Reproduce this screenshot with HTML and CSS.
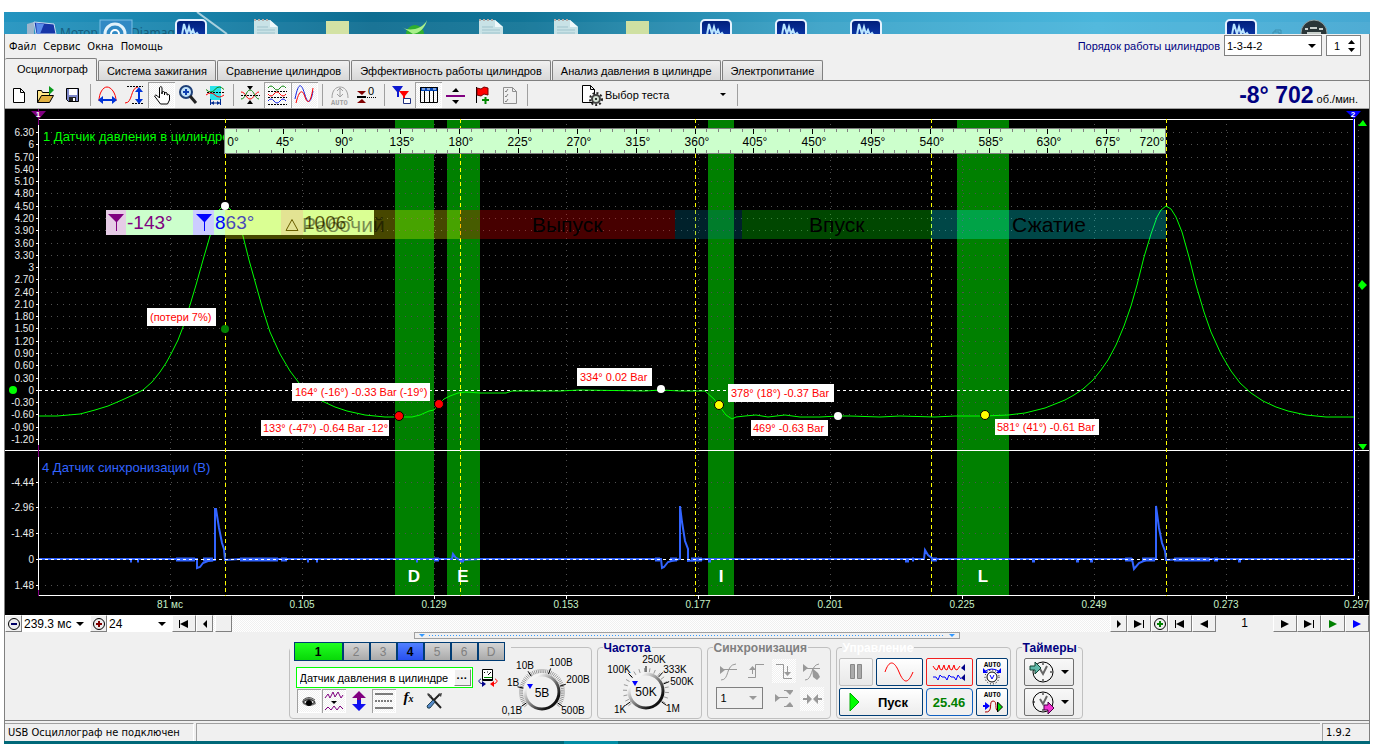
FILE: index.html
```html
<!DOCTYPE html>
<html lang="ru">
<head>
<meta charset="utf-8">
<title>USB Осциллограф</title>
<link rel="stylesheet" href="styles.css">
</head>
<body>
<svg class="desktop" viewBox="4 12 1366 22" aria-hidden="true">
  <defs>
    <linearGradient id="sky" x1="0" x2="1" y1="0" y2="0">
      <stop offset="0" stop-color="#2394c0"/><stop offset=".12" stop-color="#1a85ad"/><stop offset=".27" stop-color="#0e6d91"/><stop offset=".38" stop-color="#127597"/><stop offset=".6" stop-color="#3ba3c8"/><stop offset=".8" stop-color="#4ab6dc"/><stop offset="1" stop-color="#46a8d2"/>
    </linearGradient>
    <linearGradient id="navy" x1="0" x2="0" y1="0" y2="1"><stop offset="0" stop-color="#001d78"/><stop offset="1" stop-color="#1144c0"/></linearGradient>
    <g id="scopeIcon"><rect x="1" y="1" width="30" height="24" rx="4" fill="url(#navy)" stroke="#e6f2ff" stroke-width="2"/><path d="M7 16l2-11 3 10 2-7 2 7 2-4 2 5 2-2 2 3" fill="none" stroke="#b9e4ff" stroke-width="2"/></g>
    <g id="pageIcon"><path d="M0 1h16l8 7v14H0z" fill="#c8e2e6"/><path d="M16 1l8 7h-8z" fill="#eef8fa"/><path d="M0 1h16" stroke="#b7aaa5" stroke-width="2" stroke-dasharray="2 2"/><path d="M3 8h11M3 11h18M3 14h18" stroke="#9fc3cc"/></g>
  </defs>
  <rect x="4" y="12" width="1366" height="22" fill="url(#sky)"/>
  <rect x="4" y="22" width="1366" height="12" fill="#fff" opacity=".05"/>
  <path d="M197 12l30 22" stroke="#a9d0de" stroke-width="2"/>
  <g class="ghost"><text x="60" y="37">Мотор</text><text x="131" y="37">Diamag 2</text></g>
  <path d="M27 24l7-2v12h-7z" fill="#9eb6cc"/><path d="M34 22l20 2 2 10H36z" fill="#1736a8" stroke="#c9dcf2"/><path d="M36 23l8 1-4 10h-3z" fill="#5b8cea"/>
  <rect x="100" y="20" width="32" height="16" fill="#3189c4" stroke="#7cc0e6"/><circle cx="115" cy="34" r="10" fill="none" stroke="#e2f2fb" stroke-width="3"/><path d="M111 34a4 4 0 0 1 8 0" fill="none" stroke="#fff" stroke-width="2"/>
  <use href="#scopeIcon" x="175" y="19"/>
  <use href="#pageIcon" x="254" y="19"/>
  <rect x="326" y="21" width="23" height="14" fill="#d3e2a4"/>
  <circle cx="415" cy="34" r="9" fill="#2fae2f"/><path d="M402 27c4 4 20 4 25-7-2 9-8 13-14 14" fill="#a8f08a"/>
  <use href="#pageIcon" x="479" y="19"/><use href="#pageIcon" x="554" y="19"/>
  <rect x="626" y="21" width="23" height="14" fill="#cfe0a2"/>
  <use href="#scopeIcon" x="700" y="19"/><use href="#scopeIcon" x="775" y="19"/><use href="#scopeIcon" x="850" y="19"/>
  <use href="#scopeIcon" x="1225" y="19"/>
  <path d="M1273 32h6v4h-6zM1275 32v-2h6v4h-2" fill="none" stroke="#3d8faf"/>
  <circle cx="1314" cy="33" r="13" fill="#2a3638" stroke="#8fa3a6"/><path d="M1305 29h3M1310 28h7M1319 29h4M1307 33h14" stroke="#c8d0cc" stroke-width="2"/>
</svg>

<main class="app">
  <header class="menubar">
    <nav class="menu">
      <a href="#file">Файл</a><a href="#service">Сервис</a><a href="#windows">Окна</a><a href="#help">Помощь</a>
    </nav>
    <div class="order">
      <label for="order">Порядок работы цилиндров</label>
      <span class="drop order-select"><select id="order"><option>1-3-4-2</option></select></span>
      <span class="spin"><input id="cyl" type="text" value="1" aria-label="Цилиндр"><svg width="9" height="14" viewBox="0 0 9 14"><path d="M1 5h7L4.500 1zM1 9h7l-3.500 4z"/></svg></span>
    </div>
  </header>

  <div class="tabs" role="tablist">
    <button class="tab tab-active" role="tab">Осциллограф</button>
    <button class="tab" role="tab">Система зажигания</button>
    <button class="tab" role="tab">Сравнение цилиндров</button>
    <button class="tab" role="tab">Эффективность работы цилиндров</button>
    <button class="tab" role="tab">Анализ давления в цилиндре</button>
    <button class="tab" role="tab">Электропитание</button>
  </div>

  <div class="toolbar">
    <button class="tool" aria-label="Новый"><svg viewBox="0 0 27 24"><path d="M8.500 5.500h7l4 4v10h-11zM15.500 5.500v4h4" fill="#fff" stroke="#000"/></svg></button>
    <button class="tool" aria-label="Открыть"><svg viewBox="0 0 27 24"><path d="M5.500 19.500v-12h4l1 2h7v3" fill="#ffe68a" stroke="#000"/><path d="M5.500 19.500l4-7h12l-4 7z" fill="#e0b040" stroke="#000"/><path d="M17 3v9l5-5z" fill="#0a9a1c"/></svg></button>
    <button class="tool" aria-label="Сохранить"><svg viewBox="0 0 27 24"><path d="M7.500 5.500h12v13H9.500l-2-2z" fill="#7d87c8" stroke="#000"/><path d="M10 6h8v6h-8z" fill="#fff"/><path d="M10 14h7v4h-7z" fill="#222"/><path d="M14 15h2v3h-2z" fill="#fff"/></svg></button>
    <span class="sep"></span>
    <button class="tool" aria-label="Ширина"><svg viewBox="0 0 27 24"><path d="M5 18c0-8 4-14 8-14s9 6 9 14" fill="none" stroke="#f00"/><path d="M5 17h17" stroke="#0032d8" stroke-width="2"/><path d="M9 13v8l-5-4zM18 13v8l5-4z" fill="#0032d8"/></svg></button>
    <button class="tool" aria-label="Высота"><svg viewBox="0 0 27 24"><path d="M4 20c8 0 5-15 13-16" fill="none" stroke="#f00"/><path d="M6 3.500h16M11 20.500h11" stroke="#000" stroke-dasharray="2 1"/><path d="M18 6v12" stroke="#0032d8" stroke-width="2"/><path d="M14 9h8l-4-5zM14 16h8l-4 5z" fill="#0032d8"/></svg></button>
    <button class="tool pressed" aria-label="Рука"><svg viewBox="0 0 27 24"><path d="M11.500 15V4.500q1.500-2 2.500 0V11v-2q2-1 2.500 0v3-2q2-1 2.500 0v2q2-1 2.500 0v5l-2 4h-7l-6-8q1-2 3 0z" fill="#fff" stroke="#000"/></svg></button>
    <button class="tool" aria-label="Лупа"><svg viewBox="0 0 27 24"><circle cx="11" cy="9" r="6" fill="#bfe0f8" stroke="#1d3f78" stroke-width="2"/><path d="M8 9h6M11 6v6" stroke="#1040b0" stroke-width="2"/><path d="M15 13l6 7" stroke="#222" stroke-width="3"/></svg></button>
    <button class="tool" aria-label="Фрагмент"><svg viewBox="0 0 27 24"><path d="M8 3h11v14H8z" fill="#28e4ea"/><path d="M4 6.500q5 5 9 0t9 0" fill="none" stroke="#108810"/><path d="M5 9.500h18" stroke="#000" stroke-dasharray="2 1"/><path d="M4 12q5-4 9 0t9 0" fill="none" stroke="#f00"/><path d="M8 20h11M8.500 16v6M18.500 16v6" stroke="#002a90"/><path d="M9 20l3-2v4zM18 20l-3-2v4z" fill="#002a90"/></svg></button>
    <span class="sep"></span>
    <button class="tool" aria-label="Масштаб"><svg viewBox="0 0 27 24"><path d="M4 9c5 0 5 7 9 7s5-7 9-7" fill="none" stroke="#f00"/><path d="M4 16c5 0 5-9 9-9s5 9 9 9" fill="none" stroke="#108810"/><path d="M4 12.500h19" stroke="#000" stroke-dasharray="2 1"/><path d="M10 3h6l-3 4zM10 21h6l-3-4z"/></svg></button>
    <button class="tool pressed" aria-label="Раздельно"><svg viewBox="0 0 27 24"><path d="M4 5q3-4 6 0t6 0 6 0" fill="none" stroke="#108810"/><path d="M4 8.500h19M4 14.500h19M4 21.500h19" stroke="#000" stroke-dasharray="2 1"/><path d="M4 11q3 4 6 0t6 0 6 0" fill="none" stroke="#f00"/><path d="M4 18q3-4 6 0t6 0 6 0" fill="none" stroke="#1020e0"/></svg></button>
    <button class="tool pressed" aria-label="Совместно"><svg viewBox="0 0 27 24"><path d="M4 16C8-4 11 2 14 12s6 8 8-4" fill="none" stroke="#1020e0"/><path d="M5 20C9 4 12 8 14 14c3 9 6 4 8-9" fill="none" stroke="#f00"/></svg></button>
    <span class="sep"></span>
    <button class="tool" aria-label="Авто" disabled><svg viewBox="0 0 27 24"><path d="M6 15c0-8 4-11 8-11s8 3 8 11M14 5v9M11 8l3-3 3 3M11 11l3 3 3-3" fill="none" stroke="#a0a0a0"/><text class="micro" x="5" y="22" fill="#a0a0a0">AUTO</text></svg></button>
    <button class="tool" aria-label="Ноль"><svg viewBox="0 0 27 24"><path d="M4 8h9l-4 4zM4 20h9l-4-4z" fill="#800000"/><path d="M4 14h9" stroke="#000" stroke-width="2"/><path d="M12 14.500h11" stroke="#000" stroke-dasharray="1 1"/><text class="zero" x="15" y="12">0</text></svg></button>
    <span class="sep"></span>
    <button class="tool" aria-label="Маркеры"><svg viewBox="0 0 27 24"><path d="M4 3h11l-4 6v5H9V9z" fill="#0c18d0"/><path d="M11 8h10l-4 5v4h-2v-4z" fill="#f00"/><path d="M15.500 15.500h7v5h-7z" fill="#fff" stroke="#203080"/></svg></button>
    <button class="tool pressed" aria-label="Таблица"><svg viewBox="0 0 27 24"><path d="M5 4h18v4H5z" fill="#0044b8"/><path d="M5.500 4.500h17v15h-17zM9.500 8v11M14.500 8v11M18.500 8v11" fill="none" stroke="#000"/><path d="M7 6h3M12 6h3M18 6h3" stroke="#fff"/></svg></button>
    <button class="tool" aria-label="Разделитель"><svg viewBox="0 0 27 24"><path d="M4 13h19" stroke="#800080" stroke-width="2"/><path d="M10 9h7l-3-4zM10 17h7l-3 4z"/></svg></button>
    <button class="tool" aria-label="Флаг"><svg viewBox="0 0 27 24"><path d="M7.500 4v16" stroke="#000"/><path d="M8 5l4 1 3-2 4 1v7l-4-1-3 2-4-1z" fill="#f00" stroke="#700"/><path d="M13 17h7M16.500 14v7" stroke="#080" stroke-width="2"/></svg></button>
    <button class="tool" aria-label="Список" disabled><svg viewBox="0 0 27 24"><path d="M7.500 4.500h9l4 4v12h-13zM16.500 4.500v4h4" fill="none" stroke="#909090"/><path d="M9 8l1 1 2-3M9 13l1 1 2-3M9 18l1 1 2-3" fill="none" stroke="#808080"/></svg></button>
    <span class="sep"></span>
    <button class="test"><svg width="22" height="22" viewBox="0 0 22 22"><path d="M1.500 1.500h8l4 4v13h-12zM9.500 1.500v4h4" fill="#fff" stroke="#000"/><circle cx="15" cy="15" r="4" fill="#d5e2d5" stroke="#444" stroke-width="2"/><circle cx="15" cy="15" r="6" fill="none" stroke="#222" stroke-width="2" stroke-dasharray="2 2"/><circle cx="15" cy="15" r="1"/></svg><span>Выбор теста</span><i class="caret"></i></button>
    <span class="sep"></span>
    <output class="rpm"><b>-8° 702</b> об./мин.</output>
  </div>

  <svg class="scope" id="scope" viewBox="5 109 1364 506" role="img" aria-label="Осциллограмма">
    <rect x="5" y="109" width="1364" height="506" fill="#000"/>
    <path d="M395 120h39v475h-39zM447 120h33v475h-33zM708 120h26v475h-26zM957 120h52v475h-52z" fill="#008000"/>
    <g id="grid"></g>
    <path d="M39 390.500h1315" class="zero-line"/>
    <path d="M38.500 119v476M38 119.500h1316M5 450.500h1364M38 595.500h1317M1354.500 119v476" stroke="#fff" fill="none"/>
    <path d="M38.500 109v16M38.500 445v12M38.500 590v6" stroke="#800080"/>
    <path d="M1353.500 119v476" stroke="#00f"/>
    <path d="M31 111h15l-7 8z" fill="#800080"/><path d="M1346 111h15l-7 8z" fill="#00f"/>
    <text class="flag" x="38" y="117">1</text><text class="flag" x="1353" y="117">2</text>
    <path d="M225.500 119v477M460.500 119v477M695.500 119v477M931.500 119v477M1166.500 119v477" class="cursor"/>

    <path class="pressure" d="M39 416L57 416 80 414 95 410 108 406 122 400 133 395 143 390 152 382 160 372 166 363 171 354 178 340 183 327 190 305 196 285 203 260 210 236 215 218 219 210 222 207 225 206 228 207 231 210 236 218 243 236 249 260 256 285 263 310 270 332 280 354 290 371 299 383 310 393 322 401 335 407 347 411 365 415 385 417 399 417 412 417 420 415 429 411 434 410 438 405 444 399 450 396 458 393 466 392 480 393 506 393 512 391 560 391 580 390 645 391 661 390 680 391 705 391 714 399 720 407 726 415 732 419 736 417 745 416 756 415 768 417 785 415 800 417 820 417 838 416 850 416 880 417 900 416 935 417 955 416 985 416 1008 415 1025 413 1045 408 1065 400 1074 395 1083 389 1093 380 1101 370 1108 360 1116 345 1124 326 1131 306 1137 285 1144 257 1151 234 1157 217 1161 210 1166 206 1171 209 1176 217 1182 232 1189 257 1196 285 1204 312 1211 332 1221 354 1231 371 1240 383 1251 393 1263 401 1276 407 1288 411 1306 415 1326 417 1354 417"/>
    <path class="sync" d="M39 559L197 559 197 568 200 567 203 563 208 561 215 560 215 509 216 509 219 528 222 543 224 549 225 560 240 559 452 559 453 554 456 558 460 560 480 559 661 559 662 568 664 567 668 562 675 560 680 559 680 506 682 522 685 541 688 549 688 561 705 559 924 559 925 550 928 555 933 559 1132 559 1134 569 1139 563 1146 560 1156 559 1156 506 1159 528 1162 543 1165 551 1166 560 1185 559 1354 559"/>
    <path class="noise" d="M130 560.500h2M137 560.500h2M176 559.500h19M203 559.500h10M240 559.500h38M281 559.500h6M307 560.500h2M316 560.500h2M416 560.500h2M434 559.500h5M460 560.500h4M655 559.500h5M670 559.500h7M691 559.500h11M708 560.500h3M905 560.500h4M912 559.500h2M931 559.500h6M1032 560.500h3M1076 560.500h3M1090 560.500h3M1125 559.500h7M1142 559.500h13M1174 559.500h36M1214 559.500h4M1238 560.500h3"/>
    <path d="M39 559.500h1315" class="zero-line"/>

    <text class="ch ch1" x="43" y="141">1 Датчик давления в цилиндре</text>
    <text class="ch ch4" x="42" y="472">4 Датчик синхронизации (В)</text>
    <rect x="224.500" y="128.500" width="941" height="25" fill="#cfc" stroke="#808080"/>
    <g id="ruler"></g>

    <path d="M106 210h268v25H106z" fill="#cfc"/>
    <path d="M106 210h20v25h-20z" fill="#e6cce6"/><path d="M193 210h21v25h-21z" fill="#ccf"/><path d="M281 210h22v25h-22z" fill="#d9d9cc"/>
    <path d="M108 214h16l-7 8v9h-1v-9z" fill="#800080"/><path d="M196 214h16l-7 8v9h-1v-9z" fill="#00f"/><path d="M286 230.500h12l-6-11z" fill="none" stroke="#302000"/>
    <text class="read" x="127" y="229" fill="#800080">-143°</text><text class="read" x="215" y="229" fill="#00f">863°</text><text class="read" x="304" y="229" fill="#111">1006°</text>
    <path d="M225 210h235v29H225z" fill="#ff0" opacity=".28"/><path d="M460 210h215v29H460z" fill="#f00" opacity=".28"/><path d="M675 210h67v29h-67z" fill="#079" opacity=".28"/><path d="M742 210h189v29H742z" fill="#0f0" opacity=".28"/><path d="M931 210h235v29H931z" fill="#0ff" opacity=".28"/>
    <text class="phase" x="302" y="232" opacity=".45">Рабочий</text><text class="phase" x="532" y="232">Выпуск</text><text class="phase" x="809" y="232">Впуск</text><text class="phase" x="1012" y="232">Сжатие</text>

    <g fill="#fff"><path d="M147 308h69v18h-69zM292 383h138v18H292zM261 420h128v16H261zM577 368h75v18h-75zM728 384h106v18H728zM751 420h77v16h-77zM995 419h104v16H995z"/><circle cx="225" cy="206" r="4"/><circle cx="661" cy="389" r="4"/><circle cx="838" cy="416" r="4"/></g>
    <g class="note"><text x="150" y="321">(потери 7%)</text><text x="295" y="396">164° (-16°) -0.33 Bar (-19°)</text><text x="263" y="432">133° (-47°) -0.64 Bar -12°</text><text x="580" y="381">334° 0.02 Bar</text><text x="731" y="397">378° (18°) -0.37 Bar</text><text x="753" y="432">469° -0.63 Bar</text><text x="997" y="431">581° (41°) -0.61 Bar</text></g>
    <circle cx="225" cy="329" r="4" fill="#008000"/><circle cx="13" cy="390" r="4" fill="#0f0"/>
    <g stroke="#000"><circle cx="399" cy="416" r="4.500" fill="#f00"/><circle cx="439" cy="404" r="4.500" fill="#f00"/><circle cx="719" cy="405" r="4.500" fill="#ff0"/><circle cx="985" cy="415" r="4.500" fill="#ff0"/></g>
    <g class="valve"><text x="414" y="582">D</text><text x="463" y="582">E</text><text x="721" y="582">I</text><text x="983" y="582">L</text></g>
    <path d="M1358 126h9l-4-6zM1358 444h9l-4 6zM1358 285l4-5 5 5-5 5z" fill="#0f0"/>
  </svg>

  <div class="scrollbar">
    <button class="sb sb-round" aria-label="Меньше"><svg width="14" height="14" viewBox="0 0 14 14"><circle cx="7" cy="7" r="5.500" fill="#eee" stroke="#000"/><path d="M4 7h6" stroke="#006" stroke-width="2"/></svg></button>
    <span class="drop plain span-select"><select aria-label="Длительность"><option>239.3 мс</option></select></span>
    <button class="sb sb-round" aria-label="Больше"><svg width="14" height="14" viewBox="0 0 14 14"><circle cx="7" cy="7" r="5.500" fill="#eee" stroke="#000"/><path d="M4 7h6M7 4v6" stroke="#800000" stroke-width="2"/></svg></button>
    <span class="drop plain div-select"><select aria-label="Деления"><option>24</option></select></span>
    <button class="sb sb-wide" aria-label="В начало"><svg width="12" height="8" viewBox="0 0 12 8"><path d="M1 0h1v8H1zM2 4l8-4v8z"/></svg></button>
    <button class="sb" aria-label="Назад"><svg width="12" height="8" viewBox="0 0 12 8"><path d="M4 4l4-4v8z"/></svg></button>
    <div class="track"><button class="thumb" aria-label="Ползунок"></button></div>
    <button class="sb" aria-label="Вперёд"><svg width="12" height="8" viewBox="0 0 12 8"><path d="M8 4L4 0v8z"/></svg></button>
    <button class="sb sb-wide" aria-label="В конец"><svg width="12" height="8" viewBox="0 0 12 8"><path d="M10 0h1v8h-1zM9 4L1 0v8z"/></svg></button>
    <button class="sb sb-round" aria-label="Добавить"><svg width="14" height="14" viewBox="0 0 14 14"><circle cx="7" cy="7" r="5.500" fill="#eee" stroke="#000"/><path d="M4 7h6M7 4v6" stroke="#008000" stroke-width="2"/></svg></button>
    <button class="sb sb-wide" aria-label="Первая страница"><svg width="12" height="8" viewBox="0 0 12 8"><path d="M1 0h1v8H1zM2 4l8-4v8z"/></svg></button>
    <button class="sb sb-wide" aria-label="Предыдущая"><svg width="12" height="8" viewBox="0 0 12 8"><path d="M2 4l8-4v8z"/></svg></button>
    <span class="page">1</span>
    <button class="sb sb-wide" aria-label="Следующая"><svg width="12" height="8" viewBox="0 0 12 8"><path d="M10 4L2 0v8z"/></svg></button>
    <button class="sb sb-wide" aria-label="Последняя"><svg width="12" height="8" viewBox="0 0 12 8"><path d="M10 0h1v8h-1zM9 4L1 0v8z"/></svg></button>
    <button class="sb sb-wide" aria-label="Воспроизвести"><svg width="12" height="8" viewBox="0 0 12 8"><path d="M10 4L2 0v8z" fill="#008000"/></svg></button>
    <button class="sb sb-wide" aria-label="Быстро"><svg width="12" height="8" viewBox="0 0 12 8"><path d="M10 4L2 0v8z" fill="#00f"/></svg></button>
  </div>

  <div class="panel">
    <div class="splitter"><i></i><span></span><i></i></div>
    <div class="groups">
      <section class="group g-channel" aria-label="Канал">
        <div class="channel-col">
          <div class="channels"><button class="c1">1</button><button>2</button><button>3</button><button class="c4">4</button><button>5</button><button>6</button><button>D</button></div>
          <div class="sensor">
            <span class="sensor-field"><input type="text" value="Датчик давления в цилиндре" aria-label="Датчик"><button aria-label="Выбрать датчик">···</button></span>
            <button class="flat" aria-label="Прибор"><svg width="20" height="20" viewBox="0 0 20 20"><path d="M4.500 1.500h10v11h-10z" fill="#fff" stroke="#000"/><path d="M5 12h9" stroke="#000" stroke-width="2"/><path d="M6 9.500h8" stroke="#080"/><path d="M6 5l1-1M9 4h1M12 4l1 1M10 7l2-2" stroke="#000"/><path d="M3 11c-3 1-3 4 2 5" fill="none" stroke="#008"/><path d="M4 13v6l4-3z" fill="#008"/><path d="M17 11c3 1 3 4-2 5" fill="none" stroke="#f00"/><path d="M16 13v6l-4-3z" fill="#f00"/></svg></button>
          </div>
          <div class="view-tools">
            <button class="cell sunken" aria-label="Видимость"><svg viewBox="0 0 24 24"><path d="M5 12q7-6 13 0l1 3q-7 4-13 0z" fill="#777"/><path d="M6 13q6-5 12 0-6 5-12 0" fill="#ddd" stroke="#333"/><circle cx="12" cy="14" r="3"/><path d="M6 11q6-5 12 0" fill="none" stroke="#555"/></svg></button>
            <button class="cell sunken" aria-label="Инверсия"><svg viewBox="0 0 24 24"><path d="M3 9l3-4 2 4 3-6 2 5 3-5 3 6 2-3M3 21l3-3 3 3 3-4 3 4 3-4 3 3" fill="none" stroke="#800080"/><path d="M9 12h6l-3 3z"/></svg></button>
            <button class="cell" aria-label="Смещение"><svg viewBox="0 0 24 24"><path d="M12 2l7 7h-5v2h-4V9H5z" fill="#800080"/><path d="M12 22l7-7h-5v-4h-4v4H5z" fill="#1010f0"/></svg></button>
            <button class="cell sunken" aria-label="Линии"><svg viewBox="0 0 24 24"><path d="M3 5h18M3 19h18" stroke="#000"/><path d="M3 12h18" stroke="#000" stroke-dasharray="2 1"/></svg></button>
            <button class="cell fx" aria-label="Функция">f<small>x</small></button>
            <button class="cell" aria-label="Настройки"><svg viewBox="0 0 24 24"><path d="M6 5l13 14M18 5l-8 8" stroke="#222" stroke-width="2"/><path d="M5 4l3 5 2-2zM16 5l4-1-1 4z" fill="#444"/><path d="M11 11l2 2-5 6q-3 1-3-2z" fill="#5488c8" stroke="#245"/></svg></button>
          </div>
        </div>
        <svg class="knob" id="volts" width="90" height="64" viewBox="500 654 90 64" aria-label="Диапазон 5В"></svg>
      </section>

      <section class="group g-freq">
        <h2>Частота</h2>
        <svg class="knob" id="freq" width="100" height="62" viewBox="598 656 100 62" aria-label="Частота 50K"></svg>
      </section>

      <section class="group g-sync">
        <h2>Синхронизация</h2>
        <div class="sync-grid">
          <button class="cell" disabled aria-label="Уровень"><svg viewBox="0 0 24 24"><path d="M5 21c9 0 4-15 15-16M4 10.500h17" fill="none" stroke="#999"/><path d="M4 7l5 4-5 4z" fill="#999"/></svg></button>
          <button class="cell" disabled aria-label="Фронт"><svg viewBox="0 0 24 24"><path d="M4 18.500h7.500v-13H20M8.500 15V9" fill="none" stroke="#999"/><path d="M5 11h7L8.500 7z" fill="#999"/></svg></button>
          <button class="cell checked" disabled aria-label="Спад"><svg viewBox="0 0 24 24"><path d="M4 5.500h7.500v14H20M15.500 7v9" fill="none" stroke="#999"/><path d="M12 13h7l-3.500 4z" fill="#999"/></svg></button>
          <button class="cell" disabled aria-label="Ручной"><svg viewBox="0 0 24 24"><path d="M5 21c8 0 5-15 14-16M3 9.500h17" fill="none" stroke="#999"/><path d="M3 5l5 4-5 4zM12 9l6 5 2 4-3 3-4-3z" fill="#999"/></svg></button>
          <span class="drop sync-select"><select disabled aria-label="Канал синхронизации"><option>1</option></select></span>
          <button class="cell" disabled aria-label="Окно"><svg viewBox="0 0 24 24"><path d="M4 10.500h12M12 3.500h9M12 19.500h9" stroke="#999"/><path d="M3 7l5 4-5 4zM14 4h7l-3 4zM14 19h7l-3-4z" fill="#999"/></svg></button>
          <button class="cell checked" disabled aria-label="Сжать"><svg viewBox="0 0 24 24"><path d="M3 11h4V7l5 5-5 5v-4H3z" fill="#999"/><path d="M22 11h-4V7l-5 5 5 5v-4h4z" fill="#999"/></svg></button>
        </div>
      </section>

      <section class="group g-control">
        <h2>Управление</h2>
        <div class="control-grid">
          <button class="cmd" disabled aria-label="Пауза"><svg width="14" height="18" viewBox="0 0 14 18"><path d="M1.500 1.500h4v14h-4zM8.500 1.500h4v14h-4z" fill="#aaa" stroke="#888"/></svg></button>
          <button class="cmd c-blue" aria-label="Развёртка"><svg width="34" height="22" viewBox="0 0 34 22"><path d="M3 11c4-12 9-12 14 0s9 12 14 0" fill="none" stroke="#f00"/></svg></button>
          <button class="cmd c-red" aria-label="Самописец"><svg width="36" height="20" viewBox="0 0 36 20"><path d="M2 4l2 3 2 1 2-5 1 4 2 1 2-5 1 4 2 1 2-5 1 4 2 1 2-5 1 4 2 1 3-4" fill="none" stroke="#f00"/><path d="M2 15h3l2 3 2-5 2 2h3l2 3 2-5 2 2h3l2 3 2-5 3 4" fill="none" stroke="#00f"/><path d="M34 2v7l-4-3zM34 12v7l-4-3z" fill="#008"/></svg></button>
          <button class="cmd c-blue" aria-label="Авто напряжение"><svg width="26" height="26" viewBox="0 0 26 26"><text class="micro" x="5" y="8">AUTO</text><path d="M5 13q8-6 16 0" fill="none" stroke="#00f"/><path d="M4 9v5h5zM22 9v5h-5z" fill="#00f"/><circle cx="13" cy="18" r="5" fill="#fff" stroke="#000"/><circle cx="13" cy="18" r="7" fill="none" stroke="#000" stroke-dasharray="1 2"/><path d="M11 16l2 4 2-4" fill="none" stroke="#00f"/></svg></button>
          <button class="cmd c-blue start"><svg width="11" height="20" viewBox="0 0 11 20"><path d="M1 1v18l9-9z" fill="#0f0" stroke="#0a0"/></svg><b>Пуск</b></button>
          <output class="cmd value">25.46</output>
          <button class="cmd c-blue" aria-label="Авто запуск"><svg width="26" height="26" viewBox="0 0 26 26"><text class="micro" x="5" y="8">AUTO</text><path d="M6 23c9 1 3-11 8-11s1 9 5 10" fill="none" stroke="#a00"/><path d="M4 17h5" stroke="#00f" stroke-width="2"/><path d="M6 13l5 4-5 4z" fill="#00f"/><path d="M18.500 13v10l5-5z" fill="#0d0" stroke="#000"/></svg></button>
        </div>
      </section>

      <section class="group g-timer">
        <h2>Таймеры</h2>
        <button class="cmd timer" aria-label="Таймер запуска"><svg width="28" height="26" viewBox="0 0 28 26"><circle cx="15" cy="13" r="10" fill="#f4f4f4" stroke="#000"/><path d="M12 10l3 5 4-8" fill="none" stroke="#666" stroke-width="2"/><path d="M15 4v2M24 13h-2M15 22v-2" stroke="#000"/><path d="M2 7h5V3l6 6-6 6v-4H2z" fill="#5fb8a8" stroke="#143"/></svg><i class="caret"></i></button>
        <button class="cmd timer" aria-label="Таймер остановки"><svg width="28" height="26" viewBox="0 0 28 26"><circle cx="15" cy="13" r="10" fill="#f4f4f4" stroke="#000"/><path d="M12 10l3 5 4-8" fill="none" stroke="#666" stroke-width="2"/><path d="M15 4v2M5 13h2M15 22v-2" stroke="#000"/><path d="M16 16h4v-3l6 6-6 6v-4h-4z" fill="#f032d0" stroke="#404"/></svg><i class="caret"></i></button>
      </section>
    </div>
  </div>

  <footer class="status">
    <span class="pane pane-msg">USB Осциллограф не подключен</span>
    <span class="pane pane-fill"></span>
    <span class="pane pane-ver">1.9.2</span>
  </footer>
</main>
<div class="taskbar"><span></span></div>
<script src="app.js"></script>
</body>
</html>
```
FILE: styles.css
```css
* { box-sizing: border-box; }
body { margin: 0; padding: 12px 12px 0 4px; background: #fff; color: #000; font: 11px/14px "Liberation Sans", Arial, sans-serif; }
button, input, select, output { font: inherit; color: inherit; margin: 0; padding: 0; border-radius: 0; }
button { background: none; border: 0; display: flex; align-items: center; justify-content: center; }
svg { display: block; }
.desktop { width: 100%; height: auto; }
.ghost { font: 12px "Noto Sans", sans-serif; fill: #0b3a55; opacity: .6; }
.app { background: #f0f0f0; border: solid #808080; border-width: 0 1px; }

.menubar { display: flex; justify-content: space-between; height: 24px; }
.menu { display: flex; gap: 7px; padding: 6px 4px 0; font: 11px/14px "DejaVu Sans Condensed", "DejaVu Sans", sans-serif; }
.menu a { color: #000; text-decoration: none; }
.order { display: flex; gap: 4px; padding: 1px 8px 0 0; color: #000080; }
.order label { line-height: 22px; }
.drop { position: relative; display: block; }
.drop::after, .caret { content: ""; border: solid transparent; border-width: 4px 4px 0; border-top-color: #000; width: 0; height: 0; }
.drop::after { position: absolute; right: 6px; top: calc(50% - 2px); pointer-events: none; }
.drop select { appearance: none; display: block; width: 100%; height: 100%; background: #fff; color: #000; border: 1px solid #808080; padding: 0 2px; opacity: 1; }
.order-select { width: 98px; height: 21px; }
.spin { display: flex; align-items: center; width: 35px; height: 21px; background: #fff; border: 1px solid #808080; }
.spin input { width: 20px; border: 0; background: none; color: #000; padding-left: 7px; }

.tabs { display: flex; align-items: flex-end; gap: 1px; height: 23px; border-bottom: 1px solid #808080; }
.tab { height: 20px; padding: 0 8px; white-space: nowrap; background: linear-gradient(#f0f0f0, #d8d8d8); border: 1px solid #808080; border-bottom: 0; border-radius: 2px 2px 0 0; flex: 0 0 auto; }
.tab-active { height: 23px; margin-bottom: -1px; background: #f0f0f0; border-left: 0; padding: 0 8px 2px 12px; }

.toolbar { display: flex; align-items: center; height: 28px; border-bottom: 1px solid #a0a0a0; }
.tool { width: 27px; height: 26px; }
.tool svg { width: 27px; height: 24px; flex: none; }
.pressed, .sunken, .checked { background: repeating-conic-gradient(#fff 0 25%, #f0f0f0 0 50%) 0 0 / 2px 2px; }
.pressed, .sunken { box-shadow: inset 1px 1px #a0a0a0, inset -1px -1px #fff; }
.sep { width: 1px; height: 22px; margin: 0 3px 0 4px; background: #a0a0a0; }
.micro { font: bold 7px "Liberation Mono", monospace; }
.zero { font: 11px "Liberation Sans", sans-serif; }
.test { width: 202px; height: 26px; padding: 0 4px 0 50px; justify-content: flex-start; }
.test span { margin: 0 auto 0 2px; }
.caret { display: block; }
.test .caret { border-width: 3px 3px 0; margin-right: 3px; }
.rpm { margin-left: auto; padding-right: 11px; white-space: nowrap; color: #000; }
.rpm b { font: bold 23px/24px "Liberation Sans", Arial, sans-serif; color: #000080; }

.scope { width: 100%; height: auto; font-family: "Liberation Sans", Arial, sans-serif; }
.scope text { white-space: pre; }
.grid-line { stroke: #505050; stroke-dasharray: 1 5; fill: none; shape-rendering: crispEdges; }
.zero-line { stroke: #fff; stroke-dasharray: 3 3; shape-rendering: crispEdges; }
.cursor { stroke: #ff0; stroke-dasharray: 4 3; shape-rendering: crispEdges; }
.tick { stroke: #fff; }
.axis-y { font-size: 10px; fill: #ececec; text-anchor: end; }
.axis-x { font-size: 10px; fill: #c8f0c8; text-anchor: middle; }
.axis-last { text-anchor: end; }
.pressure { fill: none; stroke: #0f0; stroke-width: 1; }
.sync { fill: none; stroke: #3264ff; stroke-width: 2; }
.noise { stroke: #3264ff; stroke-width: 4; }
.ch { font-size: 13px; }
.ch1 { fill: #0f0; }
.ch4 { fill: #3264ff; }
.ruler-text { font-size: 12px; text-anchor: middle; fill: #000; }
.flag { font: bold 8px "Liberation Sans", sans-serif; fill: #fff; text-anchor: middle; }
.read { font-size: 19px; }
.phase { font-size: 21px; fill: #000; }
.note { font-size: 11px; fill: #f00; }
.valve { font-size: 17px; font-weight: bold; fill: #fff; text-anchor: middle; }

.scrollbar { display: flex; height: 17px; font-size: 12px; }
.sb { width: 17px; height: 17px; border: 1px solid; border-color: #fff #808080 #808080 #fff; background: #f0f0f0; flex: none; }
.sb svg { flex: none; }
.sb-wide { width: 24px; }
.plain select { border: 0; }
.span-select { width: 68px; }
.div-select { width: 65px; }
.track { flex: 1; background: repeating-conic-gradient(#fff 0 25%, #f0f0f0 0 50%) 0 0 / 2px 2px; padding-left: 2px; }
.thumb { width: 17px; height: 17px; border: 1px solid; border-color: #fff #808080 #808080 #fff; background: #f0f0f0; }
.page { width: 57px; text-align: center; line-height: 17px; }

.panel { border-bottom: 1px solid #808080; padding-bottom: 1px; }
.splitter { width: 40%; height: 7px; margin: 0 auto; border: 1px solid #a0a0a0; display: flex; align-items: center; gap: 4px; padding: 0 4px; }
.splitter span { flex: 1; height: 1px; background: repeating-linear-gradient(90deg, #3399ff 0 1px, transparent 1px 3px); }
.splitter i { border: solid transparent; border-width: 3px 3px 0; border-top-color: #3399ff; }
.groups { display: flex; justify-content: center; gap: 5px; padding: 8px 3px 0 0; }
.group { height: 72px; border: 1px solid #c0c0c0; border-radius: 4px; flex: none; }
.group h2 { display: table; margin: -7px 0 0 5px; padding: 0 1px; background: #f0f0f0; color: #000080; font: bold 12px/14px "Liberation Sans", Arial, sans-serif; }
.g-channel { width: 303px; display: flex; justify-content: space-between; }
.g-freq { width: 105px; }
.g-sync { width: 124px; }
.g-sync h2 { color: #808080; }
.g-control { width: 175px; }
.g-control h2 { color: #fff; }
.g-timer { width: 67px; }
.channel-col { margin-top: -6px; }
.channels { display: flex; background: #f0f0f0; padding: 0 6px 0 4px; }
.channels button { width: 27px; height: 19px; border: 1px solid #003c74; background: linear-gradient(#d4d4d4, #aaa); color: #808080; font-size: 12px; }
.channels .c1 { width: 49px; background: linear-gradient(#20ff20, #08d808); color: #000; font-weight: bold; }
.channels .c4 { background: linear-gradient(#5080ff, #2850f0); color: #000; font-weight: bold; }
.sensor { display: flex; padding: 6px 0 0 6px; gap: 5px; }
.sensor-field { display: flex; width: 177px; height: 21px; background: #fff; border: 1px solid #0f0; padding: 1px; }
.sensor-field input { flex: 1; min-width: 0; border: 0; padding-left: 2px; background: none; color: #000; }
.sensor-field button { width: 17px; border: 1px solid; border-color: #fff #808080 #808080 #fff; background: #f0f0f0; font-weight: bold; }
.view-tools { display: flex; padding: 1px 0 0 7px; gap: 1px; }
.cell { width: 24px; height: 24px; }
.cell svg { width: 24px; height: 24px; flex: none; }
.fx { font: italic bold 15px "Liberation Serif", serif; align-items: baseline; }
.fx small { font-size: 10px; }
.knob { font: 10px "Liberation Sans", Arial, sans-serif; flex: none; }
.knob text { text-anchor: middle; }
.knob .dial { font-size: 12px; }
.g-channel .knob { margin: 6px 0 0 -12px; }
.g-freq .knob { margin-left: 1px; }

.sync-grid { display: grid; grid-template-columns: repeat(4, 24px); gap: 4px; padding: 4px 0 0 8px; }
.sync-select { grid-column: span 2; width: 47px; height: 22px; }
.sync-select select { background: #f0f0f0; padding-left: 4px; }
.sync-select::after { border-top-color: #999; }
.control-grid { display: grid; grid-template-columns: 34px 47px 47px 32px; gap: 2px 3px; padding: 3px 0 0 2px; }
.cmd { height: 28px; border: 1px solid #c0c0c0; border-radius: 2px; background: linear-gradient(#f8f8f8, #e8e8e8); display: flex; align-items: center; justify-content: center; }
.cmd svg { flex: none; }
.c-blue { border-color: #003c74; background: linear-gradient(#fff, #ececec); }
.c-red { border-color: #f02020; }
.start { grid-column: span 2; gap: 18px; padding-right: 4px; font: bold 13px "Liberation Sans", Arial, sans-serif; }
.value { border-color: #1060c0; border-radius: 4px; background: #f0f0f0; color: #008000; font: bold 13px "Liberation Sans", Arial, sans-serif; }
.timer { width: 50px; margin: 2px 0 0 7px; gap: 5px; border-color: #707070; }
.g-timer h2 + .timer { margin-top: 3px; }

.status { display: flex; margin-top: 2px; height: 18px; gap: 2px; font: 11px/17px "DejaVu Sans Condensed", "DejaVu Sans", sans-serif; }
.pane { border: solid #a0a0a0; border-width: 1px 0 0; padding-left: 3px; }
.pane-msg { width: 189px; white-space: nowrap; border-right: 1px solid #fff; }
.pane-fill { flex: 1; border-left-width: 1px; }
.pane-ver { width: 47px; border-left-width: 1px; }
.taskbar { height: 4px; background: #006878; }
.taskbar span { display: block; width: 54px; height: 4px; margin-left: 41%; background: #008ca4; }
```
FILE: app.js
```js
const NS = "http://www.w3.org/2000/svg";

function add(parent, name, attrs, text) {
  const node = document.createElementNS(NS, name);
  for (const key in attrs) node.setAttribute(key, attrs[key]);
  if (text !== undefined) node.textContent = text;
  parent.appendChild(node);
}

/* Plot grid and axes */
const grid = document.getElementById("grid");
function level(y, label) {
  add(grid, "path", { d: `M45 ${y + 0.5}H1354`, class: "grid-line" });
  add(grid, "path", { d: `M36 ${y + 0.5}h3`, class: "tick" });
  add(grid, "text", { x: 34, y: y + 4, class: "axis-y" }, label);
}
for (let i = 0; i <= 25; i++) {
  const v = (63 - i * 3) / 10;
  level(Math.round(132 + i * 12.28), v === 6 || v === 3 || v === 0 ? String(v) : v.toFixed(2));
}
[[482, "-4.44"], [507, "-2.96"], [533, "-1.48"], [559, "0"], [585, "1.48"]].forEach(([y, t]) => level(y, t));
["81 мс", "0.105", "0.129", "0.153", "0.177", "0.201", "0.225", "0.249", "0.273", "0.297"].forEach((t, i) => {
  const x = 170 + i * 132;
  const last = i === 9;
  add(grid, "path", { d: `M${x + 0.5} 124V595`, class: "grid-line" });
  add(grid, "path", { d: `M${x + 0.5} 596v3`, class: "tick" });
  add(grid, "text", { x: last ? 1369 : x, y: 608, class: last ? "axis-x axis-last" : "axis-x" }, t);
});

/* Crank angle ruler, one mark for every 9 degrees */
const ruler = document.getElementById("ruler");
for (let deg = 9; deg < 720; deg += 9) {
  const x = Math.round(225 + deg * 941 / 720) - 0.5;
  const major = deg % 45 === 0;
  const len = major ? 5 : 3;
  add(ruler, "path", { d: `M${x} 129v${len}M${x} 153v${-len}`, stroke: major ? "#000" : "#808080" });
}
for (let deg = 0; deg <= 720; deg += 45) {
  const shift = deg === 0 ? 8 : deg === 720 ? -14 : 1;
  add(ruler, "text", { x: Math.round(225 + deg * 941 / 720) + shift, y: 146, class: "ruler-text" }, deg + "°");
}

/* Rotary knobs */
function knob(id, cx, cy, value, pointer, marks, labels, step) {
  const svg = document.getElementById(id);
  const ray = (a, r1, r2, attrs) => {
    const c = Math.cos(a * Math.PI / 180), s = Math.sin(a * Math.PI / 180);
    add(svg, "path", { d: `M${cx + c * r1} ${cy + s * r1}L${cx + c * r2} ${cy + s * r2}`, ...attrs });
  };
  for (let a = 140; a <= 400; a += step) ray(a, 19, 23, { stroke: "#999" });
  marks.forEach(a => ray(a, 19, 25, { stroke: "#000" }));
  const defs = document.createElementNS(NS, "defs");
  defs.innerHTML = `<linearGradient id="${id}Rim" x1="0" y1="0" x2="1" y2="1"><stop offset=".2" stop-color="#f4f4f4"/><stop offset=".8" stop-color="#111"/></linearGradient>`;
  svg.appendChild(defs);
  add(svg, "circle", { cx, cy, r: 17, fill: "#f0f0f0", stroke: `url(#${id}Rim)`, "stroke-width": 3 });
  add(svg, "path", { d: `M${pointer[0]} ${pointer[1]}h6l-3 5z`, fill: "#00f" });
  add(svg, "text", { x: cx, y: cy + 5, class: "dial" }, value);
  labels.forEach(([x, y, t]) => add(svg, "text", { x, y }, t));
}
knob("volts", 541, 692, "5В", [526, 684], [145, 192, 236, 290, 342, 395],
  [[524, 669, "10В"], [560, 666, "100В"], [512, 686, "1В"], [577, 683, "200В"], [511, 714, "0,1В"], [572, 714, "500В"]], 5);
knob("freq", 645, 692, "50K", [631, 682], [145, 225, 270, 312, 338, 395],
  [[618, 674, "100K"], [653, 664, "250K"], [674, 674, "333K"], [681, 686, "500K"], [619, 714, "1K"], [672, 713, "1M"]], 14);
```
